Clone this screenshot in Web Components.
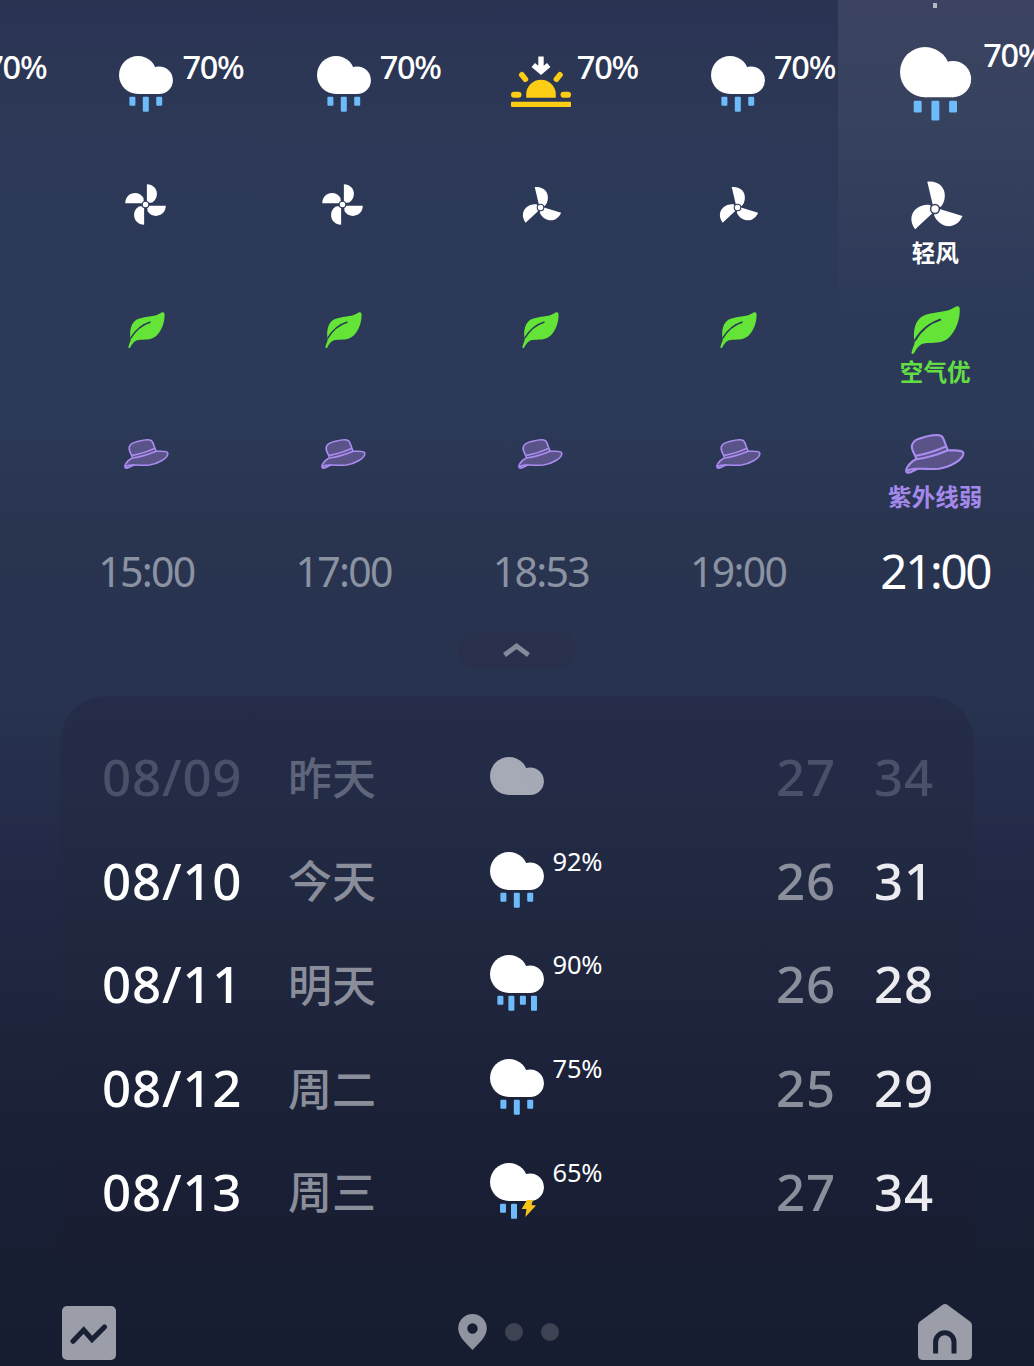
<!DOCTYPE html>
<html lang="zh-CN">
<head>
<meta charset="utf-8">
<title>天气</title>
<style>
  body {
    margin: 0;
    overflow: hidden;
    font-family: "Noto Sans", "Noto Sans CJK SC", sans-serif;
    color: #fff;
  }
</style>
</head>
<body>
<weather-page>
  <hour-strip slot="hours">
    <hour-column sky="rain" wind="fan4" rain="70%"></hour-column>
    <hour-column sky="rain" wind="fan4" rain="70%">15:00</hour-column>
    <hour-column sky="rain" wind="fan4" rain="70%">17:00</hour-column>
    <hour-column sky="sunset" wind="fan3" rain="70%">18:53</hour-column>
    <hour-column sky="rain" wind="fan3" rain="70%">19:00</hour-column>
    <hour-column sky="rain" wind="fan3" rain="70%" active>
      21:00
      <span slot="wind">轻风</span>
      <span slot="air">空气优</span>
      <span slot="uv">紫外线弱</span>
    </hour-column>
  </hour-strip>
  <day-list slot="days">
    <day-row past sky="cloud" date="08/09" low="27" high="34">昨天</day-row>
    <day-row sky="rain" rain="92%" date="08/10" low="26" high="31">今天</day-row>
    <day-row sky="heavy" rain="90%" date="08/11" low="26" high="28">明天</day-row>
    <day-row sky="rain" rain="75%" date="08/12" low="25" high="29">周二</day-row>
    <day-row sky="thunder" rain="65%" date="08/13" low="27" high="34">周三</day-row>
  </day-list>
  <nav-bar slot="nav"></nav-bar>
</weather-page>

<script>
(function () {

  const cloud = `<g fill="var(--cloud, #fff)">
    <circle cx="19" cy="19" r="19"/>
    <circle cx="40.2" cy="24.3" r="13.7"/>
    <path d="M19 19h17l4.2 6v13H19z"/>
  </g>`

  const drop = (x, h) => `<rect x="${x}" y="40.7" width="6" height="${h}" rx="1" fill="#6dbbfb"/>`

  // blades are drawn around 0,0 and rotated
  const blades = (d, n) => {
    let out = ''
    for (let i = 0; i < n; i++) {
      out += `<path d="${d}" fill="#fff" transform="rotate(${i * 360 / n})"/>`
    }
    return out + '<circle r="4.4" fill="#fff" stroke="#34405c" stroke-width="1.5"/>'
  }

  // name: [width, height, viewBox, markup]
  const icons = {
    cloud: [54, 38, '0 0 54 38', cloud],
    rain: [54, 56, '0 0 54 56', cloud + drop(10.4, 9) + drop(23.8, 15) + drop(37.2, 9)],
    heavy: [54, 56, '0 0 54 56', cloud + drop(7.4, 9) + drop(18.4, 15) + drop(29.9, 9) + drop(41, 15)],
    thunder: [54, 56, '0 0 54 56', cloud + drop(10, 9) + drop(21, 15) +
      '<path d="M37 37h6l-1.5 5 4.5.4L35.3 54l1.2-8H31.7z" fill="#f9c31a"/>'],
    sunset: [60, 51, '0 0 60 51', `
      <g fill="#fbcd14">
        <rect y="45.7" width="60" height="5.2" rx="1"/>
        <rect y="35.7" width="10.5" height="6" rx="3"/>
        <rect x="49.5" y="35.7" width="10.5" height="6" rx="3"/>
        <path d="M15.2 41.7V38.5a14.8 14.8 0 0 1 29.6 0v3.2z"/>
      </g>
      <path d="M10.8 18.8l3.6 4.4M49 18.8l-3.6 4.4" stroke="#fbcd14" stroke-width="5.6" stroke-linecap="round"/>
      <path d="M30 .5v15M22.3 9l7.7 6.5L37.7 9" fill="none" stroke="#fff" stroke-width="5.4"/>`],
    fan4: [60, 60, '-30 -30 60 60', blades('M1.8-27C10-27 15.2-21 15.2-14 15.2-9 13-5.5 9-2.8L1.8-2z', 4)],
    fan3: [60, 60, '-30 -30 60 60', blades('M-7.7-27.3C4-28.5 9.8-21 9.8-13.5 9.8-9 8.5-5 5.6-2L-2.2-4z', 3)],
    leaf: [49, 48, '0 0 49 48', `
      <path d="M46 .3C48 0 48.8 1 48.8 4 48.8 14 45 24.5 38.3 31.300 31.500 38 21.500 36.500 14 37.200 8 38 5.400 43 3 47.200 2.200 48.500.1 48 .5 46.600 1.200 43.500 2.300 40.500 3.600 37.500 1.900 27 3.300 17.500 9 12 15.500 6 32 7 40 3.300 42.500 2 44.200.8 46 .3z" fill="#63e436"/>
      <path d="M30 13.3C19.5 16.5 9.500 24.500 3.200 35.500" fill="none" stroke="#2b3a55" stroke-width="1.9"/>`],
    hat: [60, 40, '0 0 60 40', `
      <g fill="#5a5388" stroke="#aa8cf0" stroke-width="2.1" stroke-linejoin="round">
        <path d="M11.3 25C10.8 21 5.8 16.5 7 11 8.2 6 13 4.8 19.5 3 25 1.5 33-.2 36.5 2.2 39.5 4.5 40.3 12 43 16.3 48 16.8 57 15.2 58.4 18.7 59.3 25.5 45 33 34 34.7 26 35.6 20 34.5 13.5 34.8 10 35.5 7 38.6 3 38.8.5 38.6.8 35.5 2.4 33 4.5 29.5 7.5 27 11.3 25z"/>
        <path d="M11 21.8C22 20 32 16.5 41.3 12.3M11.3 25.3C22 24 33 20.5 43 16.3M2 37.2C4.5 34.8 8 34.5 13.5 34.8" fill="none"/>
      </g>`]
  }

  const icon = (name, scale = 1) => {
    const [w, h, box, body] = icons[name]
    return `<svg width="${w * scale}" height="${h * scale}" viewBox="${box}">${body}</svg>`
  }

  class WeatherPage extends HTMLElement {
    constructor() {
      super()
      this.attachShadow({mode: 'open'})
      this.shadowRoot.innerHTML = `
        <style>
          :host {
            display: flex;
            flex-direction: column;
            box-sizing: border-box;
            width: 1034px;
            height: 1366px;
            overflow: hidden;
            background: linear-gradient(#2b3353 0, #2c3856 110px, #2c3959 400px, #29354f 540px,
              #283350 620px, #27334f 700px, #232a47 850px, #1d243c 1020px, #191f34 1180px, #171d31 1366px);
          }
          .toggle {
            display: flex;
            align-items: center;
            justify-content: center;
            align-self: center;
            width: 118px;
            height: 36px;
            margin: 0 0 28px;
            border-radius: 18px;
            background: #29304b;
          }
        </style>
        <slot name="hours"></slot>
        <div class="toggle">
          <svg width="28" height="16" viewBox="0 0 28 16"><path d="M1.5 13L13.5 4l12 9" fill="none" stroke="#838a9b" stroke-width="4.8"/></svg>
        </div>
        <slot name="days"></slot>
        <slot name="nav"></slot>
      `
    }
  }

  class HourStrip extends HTMLElement {
    constructor() {
      super()
      this.attachShadow({mode: 'open'})
      // scrolled so that the first column is partly off screen
      this.shadowRoot.innerHTML = `
        <style>
          :host { display: flex; flex: none; height: 632px; margin-left: -149.3px; }
        </style>
        <slot></slot>
      `
    }
  }

  class HourColumn extends HTMLElement {
    constructor() {
      super()
      this.attachShadow({mode: 'open'})
    }

    connectedCallback() {
      const active = this.hasAttribute('active')
      const big = active ? 1.32 : 1
      const small = active ? 1 : 0.75
      this.shadowRoot.innerHTML = `
        <style>
          :host {
            display: flex;
            flex-direction: column;
            align-items: center;
            flex: none;
            width: 197.2px;
          }
          :host([active]) {
            background: linear-gradient(rgba(255,255,255,.08), rgba(255,255,255,.045) 150px, rgba(255,255,255,0) 320px) 1.3px 0 no-repeat;
          }
          svg { display: block; overflow: visible; }
          .sky {
            position: relative;
            box-sizing: border-box;
            height: 175px;
            padding-top: 56px;
          }
          :host([active]) .sky { padding-top: 47px; }
          .tick {
            position: absolute;
            top: 3px;
            left: calc(50% - 2px);
            width: 4px;
            height: 5px;
            background: #b6b9c3;
          }
          .rain {
            position: absolute;
            top: 47px;
            left: calc(50% + 36px);
            font-size: 32.5px;
            line-height: 40px;
            letter-spacing: -1.3px;
            font-weight: 500;
          }
          :host([active]) .rain { top: 35px; left: calc(50% + 48px); }
          .metric {
            display: flex;
            flex-direction: column;
            align-items: center;
            height: 125px;
            font-size: 23.6px;
            line-height: 24px;
            font-weight: 700;
            white-space: nowrap;
          }
          .metric.air { height: 124px; color: #63dd43; }
          .metric.uv { height: 118px; color: #a488ea; }
          .pic { display: flex; align-items: center; height: 65px; margin-top: -2.5px; margin-bottom: 2px; }
          .wind .pic { margin-bottom: 3px; }
          .wind svg { margin-top: 8px; }
          :host(:not([active])) .wind svg { margin: ${this.getAttribute('wind') === 'fan4' ? -1 : 5}px 1.5px 0 0; }
          .air .pic { margin-bottom: -3px; }
          .uv .pic { margin-bottom: -2px; }
          .time {
            margin-top: -1px;
            font-size: 41px;
            line-height: 60px;
            letter-spacing: -1.7px;
            color: #8b92a2;
          }
          :host([active]) .time {
            font-size: 47.5px;
            letter-spacing: -2.3px;
            color: #fff;
          }
        </style>
        <div class="sky">
          ${active ? '<div class="tick"></div>' : ''}
          ${icon(this.getAttribute('sky'), big)}
          <span class="rain">${this.getAttribute('rain')}</span>
        </div>
        <div class="metric wind"><div class="pic">${icon(this.getAttribute('wind'), small)}</div><slot name="wind"></slot></div>
        <div class="metric air"><div class="pic">${icon('leaf', small)}</div><slot name="air"></slot></div>
        <div class="metric uv"><div class="pic">${icon('hat', small)}</div><slot name="uv"></slot></div>
        <div class="time"><slot></slot></div>
      `
    }
  }

  class DayList extends HTMLElement {
    constructor() {
      super()
      this.attachShadow({mode: 'open'})
      this.shadowRoot.innerHTML = `
        <style>
          :host {
            display: flex;
            flex-direction: column;
            flex: none;
            box-sizing: border-box;
            width: 914px;
            height: 564px;
            margin-left: 60px;
            padding: 30px 30px 0 42px;
            border-radius: 46px 46px 0 0;
            background: linear-gradient(#252c49 0, #222a43 150px, #1e253c 300px, #1a2036 440px, #181d32 564px);
          }
        </style>
        <slot></slot>
      `
    }
  }

  class DayRow extends HTMLElement {
    constructor() {
      super()
      this.attachShadow({mode: 'open'})
    }

    connectedCallback() {
      this.shadowRoot.innerHTML = `
        <style>
          :host {
            display: grid;
            grid-template-columns: 186px 202px 286px 98px auto;
            align-items: center;
            height: 103.6px;
            font-size: 51px;
            line-height: 60px;
            letter-spacing: .8px;
            font-weight: 500;
          }
          .date, .low, .high { margin-top: -3px; }
          .day { font-size: 44px; letter-spacing: 0; color: #8a8e9b; }
          .sky { display: flex; align-items: flex-start; margin-top: -3px; }
          .rain {
            margin: -8px 0 0 8.5px;
            font-size: 25.5px;
            line-height: 34px;
            letter-spacing: -.2px;
            font-weight: 450;
          }
          .low { color: #8b8f9c; }
          .high { color: #ececf0; }
          :host([past]) { --cloud: #a6a9b6; }
          :host([past]) .date, :host([past]) .low, :host([past]) .high { color: #4a5067; }
          :host([past]) .day { color: #5f657a; }
        </style>
        <span class="date">${this.getAttribute('date')}</span>
        <span class="day"><slot></slot></span>
        <span class="sky">${icon(this.getAttribute('sky'))}<span class="rain">${this.getAttribute('rain') || ''}</span></span>
        <span class="low">${this.getAttribute('low')}</span>
        <span class="high">${this.getAttribute('high')}</span>
      `
    }
  }

  class NavBar extends HTMLElement {
    constructor() {
      super()
      this.attachShadow({mode: 'open'})
      this.shadowRoot.innerHTML = `
        <style>
          :host {
            display: grid;
            grid-template-columns: 1fr auto 1fr;
            align-items: center;
            height: 56px;
            margin: 44px 62px 0 62.4px;
          }
          svg { display: block; }
          .chart { margin-top: 2px; }
          .pages { display: flex; align-items: center; gap: 18px; margin-left: -17px; }
          i { width: 18px; height: 18px; border-radius: 50%; background: #3e4353; }
          .home { justify-self: end; }
        </style>
        <svg class="chart" width="54" height="54" viewBox="0 0 54 54">
          <rect width="54" height="54" rx="5" fill="#9b9ea8"/>
          <path d="M11 35.2L21.7 24l8.3 9.5L42.5 21" fill="none" stroke="#1a2034" stroke-width="5.2" stroke-linecap="round"/>
        </svg>
        <div class="pages">
          <svg width="29" height="36" viewBox="0 0 29 36"><path fill-rule="evenodd" d="M14.5 0A14.3 14.3 0 0 1 28.8 14.5C28.8 23 20 30 14.5 36 9 30 .2 23 .2 14.5A14.3 14.3 0 0 1 14.5 0zm0 9.3a5.2 5.2 0 1 0 0 10.4 5.2 5.2 0 0 0 0-10.4z" fill="#9093a0"/></svg>
          <i></i><i></i>
        </div>
        <svg class="home" width="54" height="56" viewBox="0 0 54 56">
          <path d="M24 1.2q3-2.2 6 0L52 17.5q2 1.5 2 4V51q0 5-5 5H5q-5 0-5-5V21.5q0-2.5 2-4z" fill="#9b9ea8"/>
          <path d="M17.6 49.500V38a9.200 9.200 0 0 1 18.400 0v11.500" fill="none" stroke="#1a2034" stroke-width="5"/>
        </svg>
      `
    }
  }

  window.customElements.define('weather-page', WeatherPage)
  window.customElements.define('hour-strip', HourStrip)
  window.customElements.define('hour-column', HourColumn)
  window.customElements.define('day-list', DayList)
  window.customElements.define('day-row', DayRow)
  window.customElements.define('nav-bar', NavBar)
})()
</script>
</body>
</html>
